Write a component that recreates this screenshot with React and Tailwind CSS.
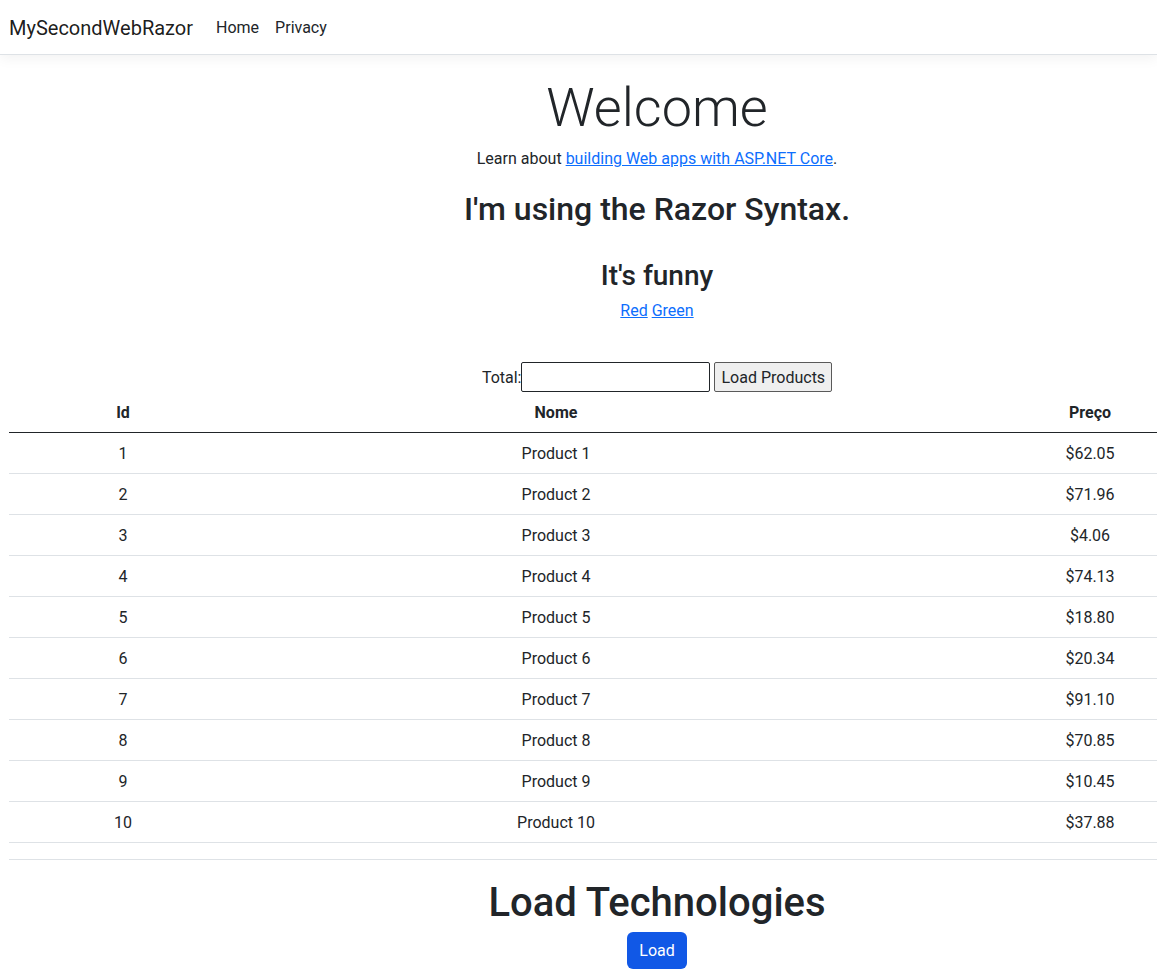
const products = [
  { id: 1, name: 'Product 1', price: '$62.05' },
  { id: 2, name: 'Product 2', price: '$71.96' },
  { id: 3, name: 'Product 3', price: '$4.06' },
  { id: 4, name: 'Product 4', price: '$74.13' },
  { id: 5, name: 'Product 5', price: '$18.80' },
  { id: 6, name: 'Product 6', price: '$20.34' },
  { id: 7, name: 'Product 7', price: '$91.10' },
  { id: 8, name: 'Product 8', price: '$70.85' },
  { id: 9, name: 'Product 9', price: '$10.45' },
  { id: 10, name: 'Product 10', price: '$37.88' },
];

export default function App() {
  return (
    <div className="min-h-[971px] w-full overflow-hidden bg-white font-['Roboto',sans-serif] text-[16px] text-[#212529]">
      {/* Navbar */}
      <header className="h-[55px] border-b border-[#dee2e6] bg-white shadow-[0_4px_12px_rgba(0,0,0,0.05)]">
        <nav className="flex h-[54px] items-center pl-[9px] pt-[1px]">
          <a className="mr-[15px] text-[20px] text-black/90">MySecondWebRazor</a>
          <a className="px-2">Home</a>
          <a className="px-2">Privacy</a>
        </nav>
      </header>

      <main className="ml-[9px] w-[1296px]">
        <div className="flex flex-col items-center text-center">
          <h1 className="mt-[19px] text-[54px] font-light leading-[67px]">Welcome</h1>
          <p className="mt-[6px] leading-6">
            Learn about <a className="text-[#0d6efd] underline">building Web apps with ASP.NET Core</a>.
          </p>
          <h2 className="mt-[19px] text-[32px] font-medium leading-[38px]">I'm using the Razor Syntax.</h2>
          <h3 className="mt-[31px] text-[28px] font-medium leading-[34px]">It's funny</h3>
          <p className="mt-[6px] leading-6">
            <a className="text-[#0d6efd] underline">Red</a> <a className="text-[#0d6efd] underline">Green</a>
          </p>
          <div className="mt-[39px] flex h-[30px] items-center">
            <span className="pt-[2px]">Total:</span>
            <input className="h-[30px] w-[189px] rounded-[2px] border border-[#212529] bg-white px-1" />
            <button className="ml-1 h-[30px] rounded-[2px] border border-[#5a5a5a] bg-[#efefef] px-[6px] pt-[1px] text-[16px]">Load Products</button>
          </div>
        </div>

        {/* Products table */}
        <div className="w-full">
          <div className="grid h-[41px] grid-cols-[228px_638px_430px] items-center border-b border-[#212529] pt-[2px] text-center font-bold">
            <div>Id</div>
            <div>Nome</div>
            <div>Preço</div>
          </div>
          {products.map(p => (
            <div key={p.id} className="grid h-[41px] grid-cols-[228px_638px_430px] items-center border-b border-[#dee2e6] pt-[2px] text-center">
              <div>{p.id}</div>
              <div>{p.name}</div>
              <div>{p.price}</div>
            </div>
          ))}
          <div className="h-[17px] border-b border-[#dee2e6]" />
        </div>

        <div className="flex flex-col items-center">
          <h1 className="mt-[19px] text-[40px] font-medium leading-[48px]">Load Technologies</h1>
          <button className="mt-[5px] h-[37px] rounded-[6px] bg-[#1158e6] px-3 pt-[1px] text-white">Load</button>
        </div>
      </main>
    </div>
  );
}
